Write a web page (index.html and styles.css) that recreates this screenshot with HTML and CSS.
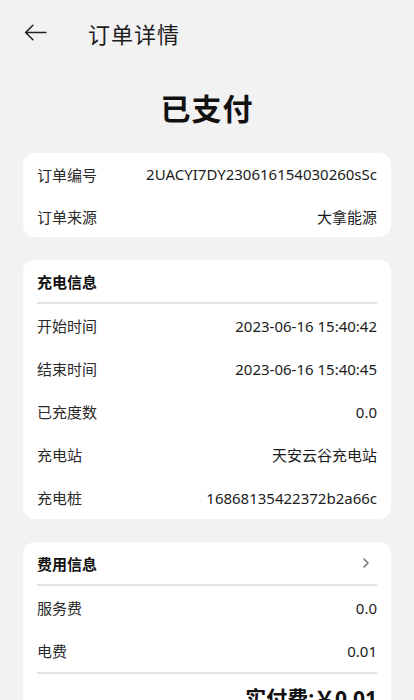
FILE: index.html
```html
<!DOCTYPE html>
<html lang="zh-CN">
<head>
<meta charset="utf-8">
<meta name="viewport" content="width=414">
<title>订单详情</title>
<link rel="stylesheet" href="styles.css">
</head>
<body>
<div class="page">
  <header class="topbar">
    <svg class="back" viewBox="0 0 24 24" width="25" height="25" aria-hidden="true">
      <path d="M22 12H2.5M9.5 5L2.5 12l7 7" fill="none" stroke="#222" stroke-width="1.5" stroke-linecap="round" stroke-linejoin="round"/>
    </svg>
    <h1 class="title">订单详情</h1>
  </header>

  <div class="status">已支付</div>

  <section class="card">
    <div class="row"><span class="label">订单编号</span><span class="value">2UACYI7DY230616154030260sSc</span></div>
    <div class="row"><span class="label">订单来源</span><span class="value">大拿能源</span></div>
  </section>

  <section class="card">
    <div class="row head"><span class="heading">充电信息</span></div>
    <div class="divider"></div>
    <div class="row tall"><span class="label">开始时间</span><span class="value">2023-06-16 15:40:42</span></div>
    <div class="row tall"><span class="label">结束时间</span><span class="value">2023-06-16 15:40:45</span></div>
    <div class="row tall"><span class="label">已充度数</span><span class="value">0.0</span></div>
    <div class="row tall"><span class="label">充电站</span><span class="value">天安云谷充电站</span></div>
    <div class="row tall"><span class="label">充电桩</span><span class="value">16868135422372b2a66c</span></div>
  </section>

  <section class="card">
    <div class="row head"><span class="heading">费用信息</span>
      <svg class="chev" viewBox="0 0 10 12" width="10" height="12" aria-hidden="true">
        <path d="M3 2l4 4-4 4" fill="none" stroke="#777" stroke-width="1.6" stroke-linecap="round" stroke-linejoin="round"/>
      </svg>
    </div>
    <div class="divider"></div>
    <div class="row tall"><span class="label">服务费</span><span class="value">0.0</span></div>
    <div class="row tall"><span class="label">电费</span><span class="value">0.01</span></div>
    <div class="divider"></div>
    <div class="row total"><span class="total-text">实付费:￥0.01</span></div>
  </section>
</div>
</body>
</html>
```

FILE: styles.css
```css
* { box-sizing: border-box; }
html, body {
  margin: 0;
  padding: 0;
  background: #f2f2f2;
}
body {
  font-family: "Noto Sans", "Noto Sans CJK SC", sans-serif;
  color: #1c1c1c;
}
.page {
  width: 414px;
  padding: 0 23px;
}
.topbar {
  height: 63px;
  display: flex;
  align-items: center;
  padding-top: 2px;
}
.back {
  flex: none;
}
.title {
  margin: 0 0 0 40px;
  font-size: 22px;
  font-weight: 400;
  color: #1c1c1c;
  letter-spacing: 1px;
}
.status {
  text-align: center;
  font-size: 30px;
  font-weight: 700;
  color: #111;
  height: 90px;
  line-height: 90px;
  padding-top: 1px;
  letter-spacing: 1px;
}
.card {
  background: #fff;
  border-radius: 12px;
  padding: 0 14px;
  margin-bottom: 23px;
}
.row {
  height: 42px;
  display: flex;
  align-items: center;
  justify-content: space-between;
  font-size: 15px;
}
.row.tall { height: 43px; }
.row.head { height: 42px; }
.label { color: #2a2a2a; }
.value { color: #1c1c1c; }
.heading {
  font-weight: 700;
  color: #111;
}
.chev { margin-right: 6px; }
.divider {
  height: 2px;
  background: #e3e3e3;
}
.row.total {
  justify-content: flex-end;
  height: 46px;
}
.total-text {
  font-size: 21px;
  font-weight: 700;
  color: #111;
}
```
